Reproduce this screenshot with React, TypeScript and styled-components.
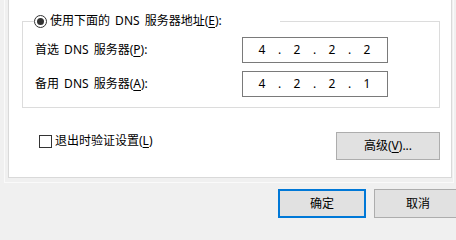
import React from "react";
import styled, { createGlobalStyle } from "styled-components";

const GlobalStyle = createGlobalStyle`
  html, body {
    margin: 0;
    padding: 0;
    background: #f0f0f0;
  }
  body {
    font-family: "Noto Sans", "Noto Sans CJK SC", sans-serif;
    font-size: 12px;
    word-spacing: 2px;
    color: #000;
  }
`;

const Page = styled.div`
  width: 456px;
  height: 218px;
  overflow: hidden;
  background: #f0f0f0;
  padding-left: 4px;
  box-sizing: border-box;
  display: flex;
  flex-direction: column;
`;

const TabFrame = styled.div`
  width: 450px;
  box-sizing: border-box;
  border: 1px solid #fafafa;
  border-top: none;
  padding: 0 1px 4px 3px;
`;

const Panel = styled.div`
  width: 444px;
  height: 178px;
  box-sizing: border-box;
  background: #fff;
  border: 1px solid #d9d9d9;
  border-top: none;
  padding-top: 13px;
  display: flex;
  flex-direction: column;
`;

const GroupBox = styled.fieldset`
  margin: 0 11px 0 13px;
  padding: 0;
  border: 1px solid #dcdcdc;
  min-width: 0;
`;

const Legend = styled.legend`
  width: 246px;
  margin-left: 11px;
  padding: 0;
  display: flex;
  align-items: center;
  gap: 3px;
  height: 16px;
  line-height: 16px;
  background: #fff;
`;

const Radio = styled.span`
  width: 13px;
  height: 13px;
  box-sizing: border-box;
  border: 1px solid #333;
  border-radius: 50%;
  display: grid;
  place-items: center;
  flex: none;

  &::after {
    content: "";
    width: 7px;
    height: 7px;
    border-radius: 50%;
    background: #333;
  }
`;

const Rows = styled.div`
  display: flex;
  flex-direction: column;
  gap: 8px;
  padding: 8px 0 10px 12px;
`;

const Row = styled.div`
  display: grid;
  grid-template-columns: 207px 146px;
  align-items: center;
  line-height: 16px;
`;

const IpBox = styled.div`
  height: 26px;
  box-sizing: border-box;
  border: 1px solid #7a7a7a;
  padding-left: 6px;
  display: flex;
  align-items: center;
  line-height: 16px;
`;

const Octet = styled.span`
  width: 26px;
  text-align: center;
`;

const Dot = styled.span`
  width: 9px;
  text-align: center;
`;

const Key = styled.u`
  text-decoration: underline;
  text-underline-offset: 2px;
`;

const OptionsRow = styled.div`
  display: flex;
  justify-content: space-between;
  align-items: flex-start;
  margin: 24px 11px 0 30px;
`;

const CheckLabel = styled.label`
  display: flex;
  align-items: center;
  gap: 3px;
  line-height: 16px;
  margin-top: 1px;
`;

const CheckBox = styled.span`
  width: 13px;
  height: 13px;
  box-sizing: border-box;
  border: 1px solid #333;
  background: #fff;
  flex: none;
`;

const Button = styled.button<{ $primary?: boolean; $width: number; $height: number }>`
  width: ${(p) => p.$width}px;
  height: ${(p) => p.$height}px;
  box-sizing: border-box;
  margin: 0;
  padding: 0;
  font: inherit;
  font-size: 12px;
  line-height: 16px;
  color: #000;
  background: #e1e1e1;
  border: ${(p) => (p.$primary ? "2px solid #0078d7" : "1px solid #adadad")};
  border-radius: 0;
  flex: none;
`;

const Footer = styled.div`
  display: flex;
  justify-content: flex-end;
  gap: 8px;
  padding-top: 6px;
  margin-right: -6px;
`;

function IpAddress({ parts }: { parts: string[] }) {
  return (
    <IpBox>
      {parts.map((p, i) => (
        <React.Fragment key={i}>
          {i > 0 && <Dot>.</Dot>}
          <Octet>{p}</Octet>
        </React.Fragment>
      ))}
    </IpBox>
  );
}

export default function App() {
  return (
    <>
      <GlobalStyle />
      <Page>
        <TabFrame>
          <Panel>
            <GroupBox>
              <Legend>
                <Radio />
                <span>
                  使用下面的 DNS 服务器地址(<Key>E</Key>):
                </span>
              </Legend>
              <Rows>
                <Row>
                  <span>
                    首选 DNS 服务器(<Key>P</Key>):
                  </span>
                  <IpAddress parts={["4", "2", "2", "2"]} />
                </Row>
                <Row>
                  <span>
                    备用 DNS 服务器(<Key>A</Key>):
                  </span>
                  <IpAddress parts={["4", "2", "2", "1"]} />
                </Row>
              </Rows>
            </GroupBox>
            <OptionsRow>
              <CheckLabel>
                <CheckBox />
                <span>
                  退出时验证设置(<Key>L</Key>)
                </span>
              </CheckLabel>
              <Button $width={104} $height={28}>
                高级(<Key>V</Key>)...
              </Button>
            </OptionsRow>
          </Panel>
        </TabFrame>
        <Footer>
          <Button $primary $width={88} $height={29}>
            确定
          </Button>
          <Button $width={88} $height={29}>
            取消
          </Button>
        </Footer>
      </Page>
    </>
  );
}
